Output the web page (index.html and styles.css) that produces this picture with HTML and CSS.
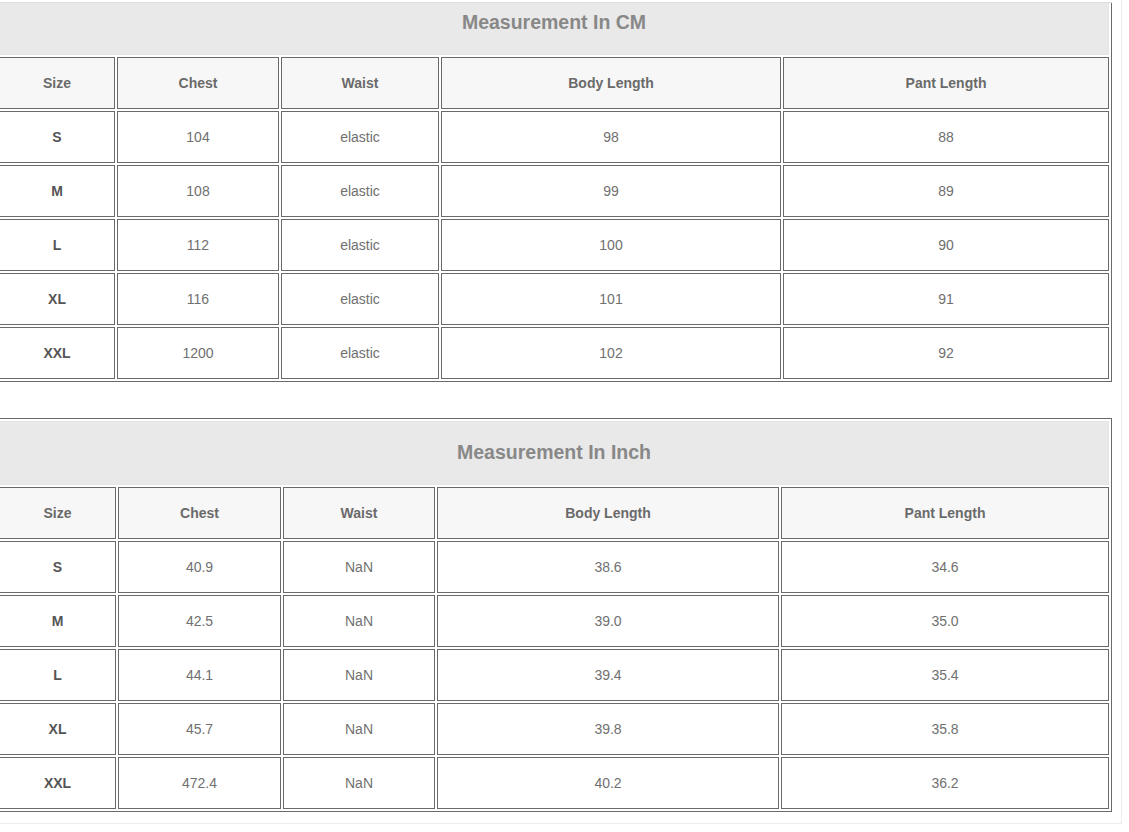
FILE: index.html
```html
<!DOCTYPE html>
<html>
<head>
<meta charset="utf-8">
<link rel="stylesheet" href="styles.css">
</head>
<body>
<div class="topline"></div>
<div class="wrap">
  <table class="size-table cm">
    <tr><th class="title" colspan="5">Measurement In CM</th></tr>
    <tr class="head">
      <th class="c1">Size</th><th class="c2">Chest</th><th class="c3">Waist</th><th class="c4">Body Length</th><th class="c5">Pant Length</th>
    </tr>
    <tr><td class="sz">S</td><td>104</td><td>elastic</td><td>98</td><td>88</td></tr>
    <tr><td class="sz">M</td><td>108</td><td>elastic</td><td>99</td><td>89</td></tr>
    <tr><td class="sz">L</td><td>112</td><td>elastic</td><td>100</td><td>90</td></tr>
    <tr><td class="sz">XL</td><td>116</td><td>elastic</td><td>101</td><td>91</td></tr>
    <tr><td class="sz">XXL</td><td>1200</td><td>elastic</td><td>102</td><td>92</td></tr>
  </table>
  <table class="size-table inch">
    <tr><th class="title" colspan="5">Measurement In Inch</th></tr>
    <tr class="head">
      <th class="c1">Size</th><th class="c2">Chest</th><th class="c3">Waist</th><th class="c4">Body Length</th><th class="c5">Pant Length</th>
    </tr>
    <tr><td class="sz">S</td><td>40.9</td><td>NaN</td><td>38.6</td><td>34.6</td></tr>
    <tr><td class="sz">M</td><td>42.5</td><td>NaN</td><td>39.0</td><td>35.0</td></tr>
    <tr><td class="sz">L</td><td>44.1</td><td>NaN</td><td>39.4</td><td>35.4</td></tr>
    <tr><td class="sz">XL</td><td>45.7</td><td>NaN</td><td>39.8</td><td>35.8</td></tr>
    <tr><td class="sz">XXL</td><td>472.4</td><td>NaN</td><td>40.2</td><td>36.2</td></tr>
  </table>
</div>
</body>
</html>
```
FILE: styles.css
```css
html, body {
  margin: 0;
  padding: 0;
  background: #ffffff;
  overflow: hidden;
}
body {
  font-family: "Liberation Sans", Arial, sans-serif;
  width: 1129px;
  height: 832px;
}
.topline {
  position: fixed;
  top: 0;
  left: 0;
  width: 1112px;
  height: 2px;
  background: #ffffff;
  border-bottom: 1px solid #dcdcdc;
  z-index: 2;
}
.wrap {
  width: 1122px;
  box-sizing: border-box;
  margin-top: -12px;
  padding: 0 10px 11px 0;
  border-right: 1px solid #ececec;
  border-bottom: 1px solid #ececec;
}
.size-table {
  width: 1116px;
  margin-left: -4px;
  border-collapse: separate;
  border-spacing: 2px;
  border: 1px solid #6a6a6a;
  table-layout: auto;
}
.size-table.inch {
  margin-top: 36px;
}
.size-table th,
.size-table td {
  box-sizing: border-box;
  border: 1px solid #6a6a6a;
  height: 52px;
  padding: 0;
  text-align: center;
  vertical-align: middle;
  font-size: 14px;
  color: #6b6b6b;
}
.size-table th.title {
  height: 64px;
  background: #e9e9e9;
  border: 1px solid #e4e4e4;
  font-size: 19.5px;
  font-weight: bold;
  color: #888888;
  padding-bottom: 2px;
}
.size-table tr.head th {
  background: #f7f7f7;
  font-weight: bold;
  color: #6a6a6a;
}
.size-table td {
  background: #ffffff;
  font-weight: normal;
  color: #707070;
}
.size-table td.sz {
  font-weight: bold;
  color: #555555;
}
.cm .c1 { width: 116px; }
.cm .c2 { width: 162px; }
.cm .c3 { width: 158px; }
.cm .c4 { width: 340px; }
.cm .c5 { width: 326px; }
.inch .c1 { width: 117px; }
.inch .c2 { width: 163px; }
.inch .c3 { width: 152px; }
.inch .c4 { width: 342px; }
.inch .c5 { width: 328px; }
```
